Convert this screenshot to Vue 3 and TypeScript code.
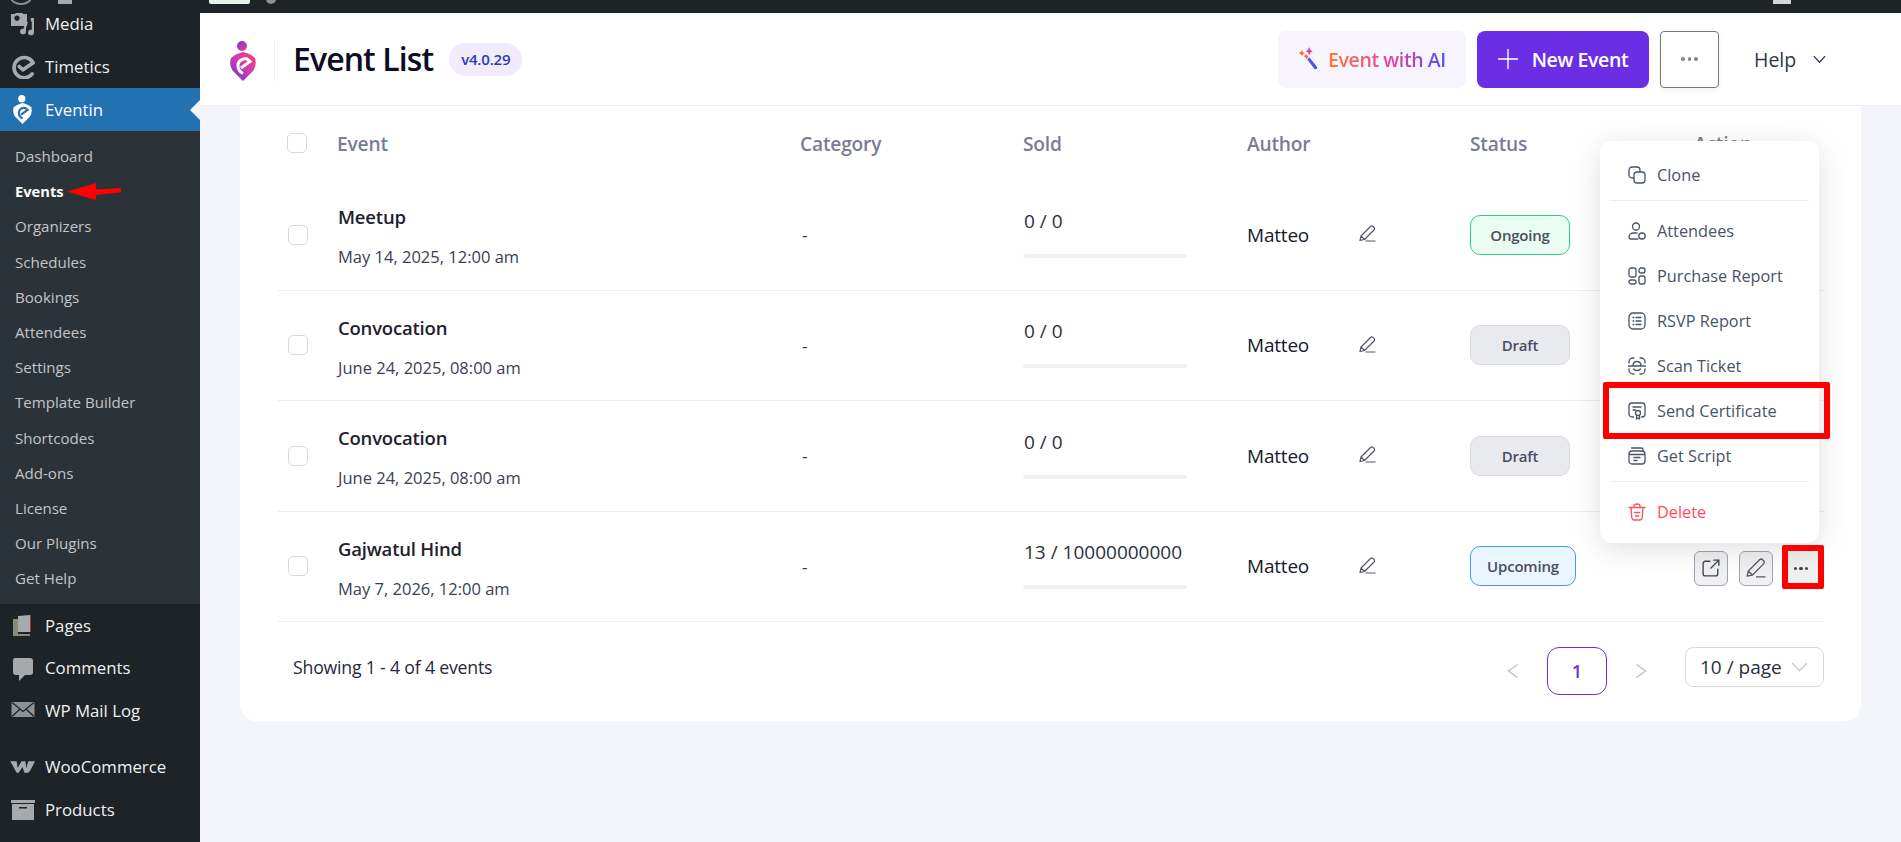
<script setup lang="ts">
interface Row { name: string; date: string; sold: string; status: string; tone: string }
const rows: Row[] = [
  { name: 'Meetup', date: 'May 14, 2025, 12:00 am', sold: '0 / 0', status: 'Ongoing', tone: 'ongoing' },
  { name: 'Convocation', date: 'June 24, 2025, 08:00 am', sold: '0 / 0', status: 'Draft', tone: 'draft' },
  { name: 'Convocation', date: 'June 24, 2025, 08:00 am', sold: '0 / 0', status: 'Draft', tone: 'draft' },
  { name: 'Gajwatul Hind', date: 'May 7, 2026, 12:00 am', sold: '13 / 10000000000', status: 'Upcoming', tone: 'upcoming' },
]
const submenu = ['Dashboard', 'Events', 'Organizers', 'Schedules', 'Bookings', 'Attendees', 'Settings', 'Template Builder', 'Shortcodes', 'Add-ons', 'License', 'Our Plugins', 'Get Help']
</script>

<template>
  <div class="page">
    <div class="adminbar">
      <span class="ab-wp"></span>
      <span class="ab-home"></span>
      <span class="ab-chip"></span>
      <span class="ab-dot"></span>
      <span class="ab-grow"></span>
      <span class="ab-avatar"></span>
    </div>
    <div class="body">
      <aside class="sidebar">
        <div class="nav-item nav-media">
          <svg class="nav-ic" viewBox="0 0 24 24"><path fill="#a7aaad" fill-rule="evenodd" d="M0 2h4l1-2h6l1 2h4v12H0zM6 3.500a2.700 2.700 0 1 0 .01 0z"/><path fill="#a7aaad" d="M23 6v14.500a3 2.800 0 1 1-2.200-2.700V9.500l-1-.1V6zM17 10l-2 6v3.500a3 2.800 0 1 1-2.200-2.700V15l2-5z"/></svg>
          <span>Media</span>
        </div>
        <div class="nav-item">
          <svg class="nav-ic" viewBox="0 0 26 26"><path fill="none" stroke="#a7aaad" stroke-width="4" stroke-linecap="round" d="M23 20.500a11 11 0 1 1 1-12L13 16l-4-3.500"/></svg>
          <span>Timetics</span>
        </div>
        <div class="nav-item nav-current">
          <svg class="nav-ic ev" viewBox="0 0 26 40">
            <circle cx="12" cy="5" r="5" fill="#fff"/>
            <path fill="#fff" d="M1 17c3-3 8-5 12-6 5 1 9 3 12 6 1.500 5 .5 9-2 13L13 40 3 30C0 26-.5 21 1 17z"/>
            <path fill="none" stroke="#2271b1" stroke-width="3" d="M11 27l9-6.500-3-2.500c-5-1-9 2-9 6.500 0 4 2 6.500 5 8"/>
          </svg>
          <span>Eventin</span>
          <i class="nav-notch"></i>
        </div>
        <ul class="submenu">
          <li v-for="s in submenu" :key="s" :class="{ active: s === 'Events' }">{{ s }}</li>
        </ul>
        <svg class="red-arrow" width="56" height="20" viewBox="0 0 56 20"><path fill="#f00" d="M1 10.500 30 2v6.500l24-1.500c1.500 0 1.500 4 0 4.500l-24 2.500V19z"/></svg>
        <div class="nav-lower">
          <div class="nav-item">
            <svg class="nav-ic" viewBox="0 0 24 24"><path fill="#8a8c7a" d="M2 5h5v15h12v2H2z"/><path fill="#a7aaad" d="M7 2l12-1v17H7z"/><path fill="#8b3a3a" d="M19 1h1v17h-1z"/></svg>
            <span>Pages</span>
          </div>
          <div class="nav-item">
            <svg class="nav-ic" viewBox="0 0 24 24"><path fill="#a7aaad" d="M4 1h15c2 0 3 1 3 3v11c0 2-1 3-3 3h-5l-6 6v-6H5c-2 0-3-1-3-3V4c0-2 1-3 2-3z"/></svg>
            <span>Comments</span>
          </div>
          <div class="nav-item nav-mail">
            <svg class="nav-ic" viewBox="0 0 24 24"><rect x="0.500" y="4" width="23" height="15" fill="#8d9296"/><path fill="none" stroke="#1d2327" stroke-width="1.200" d="M1 4.500l11 9 11-9M1 18.500l8-7.500M23 18.500l-8-7.500"/></svg>
            <span>WP Mail Log</span>
          </div>
          <div class="nav-item nav-woo">
            <svg class="nav-ic" viewBox="0 0 26 14"><path fill="#a7aaad" d="M0 1h7l1 7 4-7h4l1 7 2-7h7c-2 4-4 9-7 12h-4l-2-6-4 6H7C5 10 3 5 0 1z"/></svg>
            <span>WooCommerce</span>
          </div>
          <div class="nav-item">
            <svg class="nav-ic" viewBox="0 0 24 20"><path fill="#a7aaad" d="M0 0h24v3H0zM1 4h22v16H1z"/><path fill="#1d2327" d="M8 7h8v1.500H8z"/></svg>
            <span>Products</span>
          </div>
        </div>
      </aside>

      <main class="main">
        <header class="header">
          <svg class="logo" width="26" height="40" viewBox="0 0 26 40">
            <defs>
              <linearGradient id="lg" x1="0.900" y1="0" x2="0.100" y2="1"><stop offset="0" stop-color="#f43f7e"/><stop offset="0.500" stop-color="#c93fb0"/><stop offset="1" stop-color="#6b2de6"/></linearGradient>
              <linearGradient id="lh" x1="0" y1="0" x2="1" y2="1"><stop offset="0" stop-color="#7a32e0"/><stop offset="1" stop-color="#f03f8a"/></linearGradient>
            </defs>
            <circle cx="12" cy="5" r="5" fill="url(#lh)"/>
            <path fill="url(#lg)" d="M1 17c3-3 8-5 12-6 5 1 9 3 12 6 1.500 5 .5 9-2 13L13 40 3 30C0 26-.5 21 1 17z"/>
            <path fill="none" stroke="#fff" stroke-width="3" d="M11 27l9-6.500-3-2.500c-5-1-9 2-9 6.500 0 4 2 6.500 5 8"/>
          </svg>
          <span class="head-div"></span>
          <h1>Event List</h1>
          <span class="version">v4.0.29</span>
          <span class="spacer"></span>
          <button class="btn-ai">
            <svg width="20" height="24" viewBox="0 0 16 20"><path fill="#f96f3b" d="M3 3l1 1.500L5.500 5 4 6 3 7.500 2 6 .5 5 2 4z"/><path fill="#e73fa0" d="M9 0l1 2.500 2 1-2 1L9 7 8 4.500l-2-1 2-1z"/><path fill="#f96f3b" d="M4.500 7.500l2-1.500 2 2-1.500 2z"/><path fill="#4a55e8" d="M7.500 10.500L9 8.500l6.500 8c.5 1-.5 2.500-2 2z"/></svg>
            <span class="ai-text">Event with AI</span>
          </button>
          <button class="btn-new">
            <svg width="20" height="20" viewBox="0 0 16 16"><path stroke="#fff" stroke-width="1.100" d="M8 0v16M0 8h16"/></svg>
            <span>New Event</span>
          </button>
          <button class="btn-more"><span></span><span></span><span></span></button>
          <div class="help">
            <span>Help</span>
            <svg width="15" height="9" viewBox="0 0 12 8"><path fill="none" stroke="#2c3a4f" stroke-width="1.200" d="M1 1l5 5.500L11 1"/></svg>
          </div>
        </header>

        <section class="card">
          <div class="tr thead">
            <div class="cell-check"><span class="check head"></span></div>
            <div>Event</div>
            <div>Category</div>
            <div>Sold</div>
            <div>Author</div>
            <div>Status</div>
            <div>Action</div>
          </div>
          <div v-for="(r, i) in rows" :key="i" class="tr row">
            <div class="cell-check"><span class="check"></span></div>
            <div class="cell-event">
              <div class="ev-name">{{ r.name }}</div>
              <div class="ev-date">{{ r.date }}</div>
            </div>
            <div class="cell-cat">-</div>
            <div class="cell-sold">
              <div class="sold-num">{{ r.sold }}</div>
              <div class="bar"></div>
            </div>
            <div class="cell-author">
              <span class="author">Matteo</span>
              <svg width="17" height="17" viewBox="0 0 17 17"><path fill="none" stroke="#555766" stroke-width="1.200" stroke-linejoin="round" d="M1 15.500l1-4.500L11.500 1.500c.8-.8 1.800-.8 2.600 0l.9.900c.8.800.8 1.800 0 2.600L5.500 14.500zM2 11l3.500 3.500M6.500 16h10"/></svg>
            </div>
            <div><span class="status" :class="r.tone">{{ r.status }}</span></div>
            <div class="cell-actions">
              <template v-if="i === 3">
                <button class="act">
                  <svg width="18" height="18" viewBox="0 0 16 16"><path fill="none" stroke="#3f4652" stroke-width="1.200" stroke-linecap="round" d="M7 2H3a2 2 0 0 0-2 2v9a2 2 0 0 0 2 2h9a2 2 0 0 0 2-2V9M8 8l7-7M10.500 1H15v4.500"/></svg>
                </button>
                <button class="act">
                  <svg width="20" height="20" viewBox="0 0 17 17"><path fill="none" stroke="#555766" stroke-width="1.100" stroke-linejoin="round" d="M1 15.500l1-4.500L11.500 1.500c.8-.8 1.800-.8 2.600 0l.9.900c.8.800.8 1.800 0 2.600L5.500 14.500zM2 11l3.500 3.500M8.500 16h8"/></svg>
                </button>
                <button class="act act-dots"><span></span><span></span><span></span></button>
              </template>
            </div>
          </div>
          <div class="foot">
            <span class="showing">Showing 1 - 4 of 4 events</span>
            <span class="spacer"></span>
            <svg class="chev" width="12" height="16" viewBox="0 0 12 16"><path fill="none" stroke="#bfbfbf" stroke-width="1.300" d="M10.500 1.500L1.500 8l9 6.500"/></svg>
            <span class="pg">1</span>
            <svg class="chev" width="12" height="16" viewBox="0 0 12 16"><path fill="none" stroke="#bfbfbf" stroke-width="1.300" d="M1.500 1.500l9 6.500-9 6.500"/></svg>
            <div class="size">
              <span>10 / page</span>
              <svg width="17" height="10" viewBox="0 0 15 9"><path fill="none" stroke="#c4c4c4" stroke-width="1.200" d="M1 1l6.500 7L14 1"/></svg>
            </div>
          </div>
        </section>
      </main>
    </div>

    <div class="menu">
      <div class="mi">
        <svg viewBox="0 0 18 18"><rect x="1" y="1" width="11" height="11" rx="3"/><rect x="6" y="6" width="11" height="11" rx="3" fill="#fff"/></svg>
        <span>Clone</span>
      </div>
      <div class="mdiv"></div>
      <div class="mi">
        <svg viewBox="0 0 18 18"><circle cx="8" cy="4.500" r="3.500"/><path d="M9 11H5.500C3 11 1 12.800 1 15c0 1 .6 2 2 2h7"/><ellipse cx="14" cy="14" rx="3.200" ry="3"/></svg>
        <span>Attendees</span>
      </div>
      <div class="mi">
        <svg viewBox="0 0 18 18"><rect x="1" y="1" width="7" height="9" rx="2"/><rect x="11" y="1" width="6" height="5" rx="2"/><rect x="1" y="13" width="7" height="4" rx="2"/><rect x="11" y="9" width="6" height="8" rx="2"/></svg>
        <span>Purchase Report</span>
      </div>
      <div class="mi">
        <svg viewBox="0 0 18 18"><rect x="1" y="1" width="16" height="16" rx="4"/><path d="M5 5.500h.8M8 5.500h5M5 9h.8M8 9h5M5 12.500h.8M8 12.500h5"/></svg>
        <span>RSVP Report</span>
      </div>
      <div class="mi">
        <svg viewBox="0 0 18 18"><path d="M1 6V5a4 4 0 0 1 4-4h1M12 1h1a4 4 0 0 1 4 4v1M1 12v1a4 4 0 0 0 4 4h1M12 17h1a4 4 0 0 0 4-4v-1M0.500 9h17M5 9c0-3 1.800-4.500 4-4.500s4 1.500 4 4.500M5.500 12c.8 1 2 1.500 3.500 1.500s2.700-.5 3.500-1.500"/></svg>
        <span>Scan Ticket</span>
      </div>
      <div class="mi">
        <svg viewBox="0 0 18 18"><path d="M5.500 15H4a3 3 0 0 1-3-3V4a3 3 0 0 1 3-3h10a3 3 0 0 1 3 3v8a3 3 0 0 1-3 3h-.5M5 5h8M5 8h2.500"/><circle cx="10" cy="11" r="2.500"/><path d="M8.500 13.500V17l1.500-1 1.500 1v-3.500"/></svg>
        <span>Send Certificate</span>
      </div>
      <div class="mi">
        <svg viewBox="0 0 18 18"><path d="M3.500 1h10c1 0 1.500.5 1.500 1.500V4M1 7a3 3 0 0 1 3-3h10a3 3 0 0 1 3 3v7a3 3 0 0 1-3 3H4a3 3 0 0 1-3-3zM1 7.500h16M6 10.500h6M6 13.500h3"/></svg>
        <span>Get Script</span>
      </div>
      <div class="mdiv"></div>
      <div class="mi danger">
        <svg viewBox="0 0 18 18"><path d="M1 4.500h16M6 4.500V3c0-1 1-2 3-2s3 1 3 2v1.500M3 4.500l.8 10c.1 1.500 1 2.500 2.500 2.500h5.400c1.500 0 2.400-1 2.500-2.500l.8-10M6.500 9.500h5M7.500 13h3"/></svg>
        <span>Delete</span>
      </div>
    </div>
    <div class="mark mark-cert"></div>
    <div class="mark mark-dots"></div>
  </div>
</template>

<style>
html, body { margin: 0; overflow: hidden; background: #f3f5fa; }
</style>

<style scoped>
.page { position: relative; width: 1901px; height: 842px; overflow: hidden; font-family: "Open Sans", "Noto Sans", sans-serif; color: #1c2233; }
.adminbar { height: 13px; background: #1d2327; display: flex; position: relative; z-index: 3; }
.ab-wp { margin: -11px 0 0 10px; width: 22px; height: 16px; border: 2px solid #8c8f94; border-radius: 50%; box-sizing: border-box; }
.ab-home { margin: -6px 0 0 26px; width: 14px; height: 10px; background: #a7aaad; }
.ab-chip { margin: -4px 0 0 137px; width: 41px; height: 8px; background: #e8f2ea; border-radius: 2px; }
.ab-dot { margin: -6px 0 0 16px; width: 10px; height: 10px; background: #8c8f94; border-radius: 50%; }
.ab-grow { flex: 1; }
.ab-avatar { margin: -6px 110px 0 0; width: 18px; height: 10px; background: #d5d6d8; }
.body { display: flex; height: 829px; }
.sidebar { width: 200px; flex: none; background: #1d2327; color: #f0f0f1; font-size: 16.800px; position: relative; }
.nav-item { height: 43px; display: flex; align-items: center; padding-left: 45px; position: relative; }
.nav-item span { white-space: nowrap; }
.nav-ic { position: absolute; left: 11px; top: 10px; width: 24px; height: 24px; }
.nav-media { margin-top: -11px; }
.nav-current { background: #2271b1; color: #fff; }
.ev { left: 13px; top: 7px; width: 19px; height: 29px; }
.nav-notch { position: absolute; right: 0; top: 12px; border: 10px solid transparent; border-right-color: #f3f5fa; border-left: 0; }
.submenu { list-style: none; margin: 0; padding: 8px 0 7px; background: #2c3338; height: 473px; box-sizing: border-box; font-size: 15.100px; color: #c3c4c7; }
.submenu li { height: 35.200px; line-height: 35.200px; padding-left: 15px; white-space: nowrap; }
.submenu .active { color: #fff; font-weight: 700; font-size: 14.700px; }
.red-arrow { position: absolute; left: 66px; top: 168px; }
.nav-lower .nav-item { height: 42.500px; }
.nav-mail .nav-ic { top: 9px; }
.nav-mail { margin-bottom: 14px; }
.nav-woo .nav-ic { height: 14px; top: 14px; left: 10px; width: 25px; }
.main { flex: 1; min-width: 0; display: flex; flex-direction: column; }
.header { height: 93px; flex: none; box-sizing: border-box; background: #fff; border-bottom: 1px solid #eceef2; display: flex; align-items: center; padding: 0 0 0 30px; position: relative; z-index: 2; }
.logo { flex: none; margin-top: 4px; }
.head-div { width: 1px; height: 40px; background: #eceef0; margin: 4px 18px 0 18px; }
h1 { margin: 0; font-size: 32px; font-weight: 600; color: #0c0c25; line-height: 40px; white-space: nowrap; letter-spacing: -0.9px; }
.version { margin-left: 16px; width: 73px; height: 33px; border-radius: 17px; background: #f1ebfb; color: #2a3bb8; font-size: 15px; font-weight: 600; display: flex; align-items: center; justify-content: center; letter-spacing: -0.2px; }
.spacer { flex: 1; }
button { font-family: inherit; cursor: pointer; }
.btn-ai { width: 188px; height: 57px; border: 0; border-radius: 8px; background: #f7f4fe; display: flex; align-items: center; justify-content: center; gap: 10px; padding: 0; }
.ai-text { font-size: 19.500px; font-weight: 600; white-space: nowrap; letter-spacing: -0.4px; background: linear-gradient(90deg, #ff7a2f, #e63fa3 55%, #4a55e8); -webkit-background-clip: text; background-clip: text; color: transparent; }
.btn-new { width: 172px; height: 57px; margin-left: 11px; border: 0; border-radius: 8px; background: #6b2ee5; color: #fff; font-size: 19.500px; font-weight: 600; display: flex; align-items: center; justify-content: center; gap: 14px; padding: 0; letter-spacing: -0.4px; white-space: nowrap; }
.btn-more { width: 59px; height: 57px; margin-left: 11px; background: #fff; border: 1px solid #777; border-radius: 4px; display: flex; align-items: center; justify-content: center; gap: 3px; padding: 0; box-shadow: 0 2px 6px rgba(0,0,0,0.05); }
.btn-more span { width: 3.500px; height: 3.500px; border-radius: 50%; background: #8a8a8a; }
.help { width: 182px; box-sizing: border-box; padding-left: 35px; display: flex; align-items: center; gap: 16px; font-size: 19.500px; font-weight: 500; color: #2c3a4f; }
.card { margin: 0 40px 0 40px; height: 615px; box-sizing: border-box; background: #fff; border-radius: 0 0 16px 16px; padding: 0 37px 0 38px; }
.tr { display: grid; grid-template-columns: 59px 463px 223px 224px 223px 224px 130px; align-items: center; }
.thead { height: 74px; box-sizing: border-box; color: #7a7c96; font-size: 19.200px; font-weight: 600; letter-spacing: -0.2px; }
.row { height: 110.500px; box-sizing: border-box; border-bottom: 1px solid #eceef0; }
.cell-check { display: flex; padding-left: 10px; }
.check { width: 20px; height: 20px; box-sizing: border-box; border: 1px solid #d9d9d9; border-radius: 5px; background: #fff; }
.check.head { margin-left: -1px; }
.cell-event { padding-top: 6px; padding-left: 1px; }
.ev-name { font-size: 18.500px; font-weight: 600; color: #1f2130; line-height: 24px; letter-spacing: -0.2px; margin-top: -2px; }
.ev-date { font-size: 16.500px; color: #3a4152; line-height: 22px; margin-top: 17px; white-space: nowrap; }
.cell-cat { font-size: 17px; color: #333; padding-left: 2px; }
.cell-sold { padding-right: 60px; padding-top: 3px; }
.sold-num { font-size: 19px; color: #2a2f3d; line-height: 24px; white-space: nowrap; margin-top: -6px; padding-left: 1px; }
.bar { height: 4px; width: 164px; border-radius: 2px; background: #eef0f3; margin-top: 21px; }
.cell-author { display: flex; align-items: center; }
.author { font-size: 19px; color: #171a2c; width: 112px; letter-spacing: -0.2px; }
.cell-author svg { margin-top: -2px; }
.status { display: inline-flex; align-items: center; justify-content: center; width: 100px; height: 40px; box-sizing: border-box; border-radius: 10px; border: 1px solid; font-size: 15px; font-weight: 600; color: #4a4e60; margin-top: 0; letter-spacing: -0.2px; }
.ongoing { background: #e9fdf2; border-color: #2ecc87; }
.draft { background: #e9eaed; border-color: #d9dade; }
.upcoming { background: #e9f5ff; border-color: #3f9cf0; width: 106px; }
.cell-actions { display: flex; gap: 11px; align-items: center; margin-top: 4px; }
.act { width: 34px; height: 35px; box-sizing: border-box; border: 1px solid #9aa3b8; border-radius: 6px; background: #f0f0f1; display: flex; align-items: center; justify-content: center; padding: 0; }
.act-dots { border-color: transparent; gap: 2px; }
.act-dots span { width: 3.500px; height: 3.500px; border-radius: 50%; background: #3d4450; }
.foot { display: flex; align-items: center; height: 72px; padding: 13px 0 0 15px; }
.showing { font-size: 17.700px; font-weight: 500; color: #252a3a; letter-spacing: -0.2px; margin-top: -8px; }
.chev { flex: none; }
.pg { width: 60px; height: 48px; margin: 0 28px; box-sizing: border-box; border: 1px solid #6b2ee5; border-radius: 12px; color: #6b2ee5; font-size: 18px; font-weight: 600; display: flex; align-items: center; justify-content: center; }
.size { width: 139px; height: 40px; margin: -8px 0 0 38px; box-sizing: border-box; border: 1px solid #d9d9d9; border-radius: 8px; display: flex; align-items: center; gap: 9px; padding-left: 14px; font-size: 19px; color: #2a2f3d; white-space: nowrap; }
.menu { position: absolute; z-index: 4; left: 1600px; top: 141px; width: 219px; height: 402px; box-sizing: border-box; background: #fff; border-radius: 12px; padding: 11px 10px; box-shadow: 0 6px 30px rgba(0,0,0,0.13); }
.mi { height: 45px; display: flex; align-items: center; gap: 11px; padding-left: 18px; font-size: 16.300px; color: #475467; white-space: nowrap; }
.mi svg { width: 18px; height: 18px; flex: none; fill: none; stroke: #475467; stroke-width: 1.300; stroke-linecap: round; stroke-linejoin: round; }
.mdiv { height: 1px; background: #edeef0; margin: 3px 0 7px; }
.danger { color: #ff4d5a; }
.danger svg { stroke: #ff4d5a; }
.mark { position: absolute; z-index: 5; box-sizing: border-box; border: 6px solid #f00; border-radius: 2px; }
.mark-cert { left: 1603px; top: 382px; width: 227px; height: 57px; }
.mark-dots { left: 1782px; top: 545px; width: 42px; height: 44px; }
</style>
